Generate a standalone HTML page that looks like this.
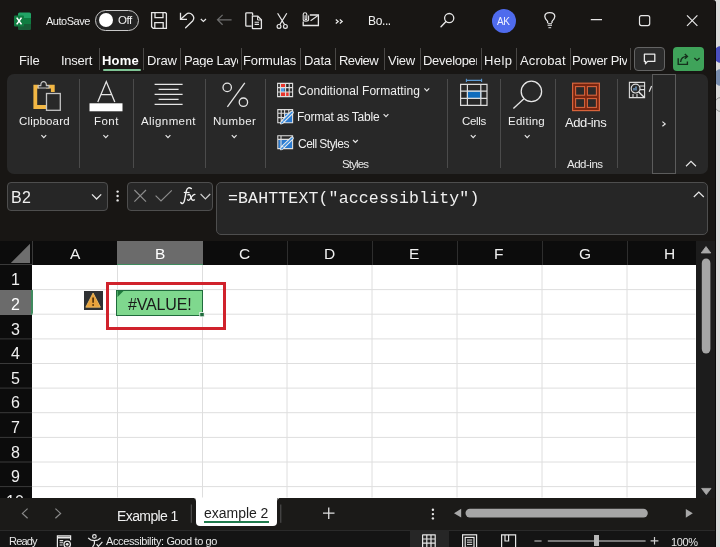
<!DOCTYPE html>
<html><head><meta charset="utf-8">
<style>
*{box-sizing:border-box;margin:0;padding:0}
html,body{width:720px;height:547px;overflow:hidden;background:#dcdcdc;font-family:"Liberation Sans",sans-serif}
.a{position:absolute}
.t{position:absolute;white-space:nowrap;line-height:1;color:#f2f2f2;will-change:transform}
#win{position:absolute;left:0;top:0;width:716px;height:547px;background:#181614;border-top-right-radius:3px;overflow:hidden;border-right:1px solid #0b0b0b}
.sep{position:absolute;width:1px;background:#4a4846}
.rsep{position:absolute;width:1px;background:#4b4b4b;top:79px;height:89px}
svg{position:absolute;overflow:visible}
</style></head><body>
<!-- outside strip -->
<div class="a" style="left:714px;top:46px;width:14px;height:17px;border-radius:8px;background:#4b50bf"></div>
<div class="a" style="left:714px;top:69px;width:14px;height:17px;border-radius:8px;background:#7a8fb0"></div>
<div class="a" style="left:714px;top:97px;width:14px;height:15px;border-radius:8px;border:1px solid #999"></div>

<div id="win">
<!-- ===== title bar ===== -->
<svg style="left:14px;top:12px" width="18" height="18" viewBox="0 0 18 18">
  <rect x="4" y="0.5" width="13" height="17" rx="1.5" fill="#21a366"/>
  <rect x="4" y="6" width="13" height="6" fill="#107c41"/>
  <rect x="4" y="12" width="13" height="5.5" fill="#185c37"/>
  <rect x="0" y="3.5" width="10" height="11" rx="1" fill="#107c41"/>
  <path d="M2.7 5.6 L7.5 12.4 M7.5 5.6 L2.7 12.4" stroke="#fff" stroke-width="1.6"/>
</svg>
<div class="a" style="left:95px;top:10px;width:44px;height:21px;border-radius:11px;border:1.5px solid #c8c8c8;background:#232323"></div>
<div class="a" style="left:99px;top:13px;width:14px;height:14px;border-radius:7px;background:#fff"></div>

<svg style="left:0;top:0" width="716" height="40" viewBox="0 0 716 40" fill="none" stroke="#e6e6e6" stroke-width="1.3">
  <!-- save -->
  <path d="M151.6 12.7 H165.5 L166.4 13.6 V28.3 H153.2 L151.6 26.7 Z"/>
  <path d="M155 12.7 V17.6 H163 V12.7"/>
  <path d="M154.8 28.3 V22.6 H163.2 V28.3"/>
  <!-- undo -->
  <path d="M180.5 12.8 V19.3 H187" />
  <path d="M180.9 19 L186 14.4 A4.7 4.7 0 0 1 192.6 21 L185.6 27.8" stroke-linecap="round"/>
  <path d="M200.8 19 L203.4 21.4 L206 19" stroke-width="1.2"/>
  <!-- back arrow -->
  <path d="M231.6 19.8 H217.5 M222.6 14.9 L217.5 19.8 L222.6 24.8" stroke="#6d6d6d" stroke-width="1.2"/>
  <!-- copy -->
  <path d="M252.6 15.4 V13.6 Q252.6 12.8 251.8 12.8 H246.6 Q245.8 12.8 245.8 13.6 V25.4 Q245.8 26.2 246.6 26.2 H251.6" />
  <path d="M252.4 16.2 H257.8 L261.4 19.8 V28.2 Q261.4 28.6 261 28.6 H252.8 Q252.4 28.6 252.4 28.2 Z"/>
  <path d="M257.6 16.4 V20 H261.2" stroke-width="1"/>
  <path d="M254.6 22.2 H259 M254.6 24.4 H259" stroke-width="1.1"/>
  <!-- scissors -->
  <path d="M277.6 13.2 L284.6 24.6 M286.8 13.2 L279.8 24.6" stroke-width="1.2"/>
  <circle cx="279" cy="26.4" r="1.9" stroke-width="1.2"/>
  <circle cx="285.4" cy="26.4" r="1.9" stroke-width="1.2"/>
  <!-- attach mail -->
  <path d="M309.8 15 H318.4 V25.5 H303.2 V21.6"/>
  <path d="M310.6 20.8 L318 15.5" stroke-width="1.1"/>
  <path d="M308.6 15.4 V19.6 C308.6 21.8 303.2 21.8 303.2 19.6 V14.4 C303.2 12.2 306.8 12.2 306.8 14.4 V19 C306.8 20 305.1 20 305.1 19 V15.2" stroke-width="1.1"/>
  <!-- >> -->
  <path d="M335.8 19.4 L338.2 21.5 L335.8 23.6 M339.8 19.4 L342.2 21.5 L339.8 23.6" stroke-width="1.3"/>
  <!-- search -->
  <circle cx="449.2" cy="18.1" r="4.6" stroke-width="1.3"/>
  <path d="M446 21.5 L441 26.8" stroke-width="1.4" stroke-linecap="round"/>
  <!-- bulb -->
  <path d="M547.6 23 V21.4 C546 19.8 544.8 18.6 544.8 16.6 C544.8 14 547 12.6 549.8 12.6 C552.6 12.6 554.8 14 554.8 16.6 C554.8 18.6 553.6 19.8 552 21.4 V23" stroke-width="1.3"/>
  <path d="M547.6 23.6 H552 M547.6 25.4 H552 M548.4 27.6 H551.2" stroke-width="1.4" stroke="#b8b8b8"/>
  <!-- window controls -->
  <path d="M590.8 19.6 H602" stroke-width="1.2"/>
  <rect x="639.5" y="15.6" width="10.2" height="10" rx="2" stroke-width="1.2"/>
  <path d="M687 15.4 L697.4 25.8 M697.4 15.4 L687 25.8" stroke-width="1.2"/>
</svg>


<div class="a" style="left:491.5px;top:8.5px;width:24px;height:24px;border-radius:12px;background:#4f6bed"></div>

<!-- ===== ribbon tabs ===== -->
<div class="sep" style="left:98.5px;top:48px;height:22px"></div>
<div class="a" style="left:102.5px;top:69px;width:38px;height:2px;background:#7fc495;border-radius:1px"></div>
<div class="sep" style="left:142.5px;top:48px;height:22px"></div>
<div class="sep" style="left:180px;top:48px;height:22px"></div>
<div class="sep" style="left:240.5px;top:48px;height:22px"></div>
<div class="sep" style="left:300px;top:48px;height:22px"></div>
<div class="sep" style="left:335px;top:48px;height:22px"></div>
<div class="sep" style="left:383.5px;top:48px;height:22px"></div>
<div class="sep" style="left:420px;top:48px;height:22px"></div>
<div class="sep" style="left:480.5px;top:48px;height:22px"></div>
<div class="sep" style="left:516px;top:48px;height:22px"></div>
<div class="sep" style="left:569.5px;top:48px;height:22px"></div>
<div class="sep" style="left:629.5px;top:48px;height:22px"></div>

<div class="a" style="left:634px;top:47px;width:31px;height:24px;border-radius:4px;border:1px solid #646464;background:#2b2b2b"></div>
<div class="a" style="left:673px;top:47px;width:31px;height:24px;border-radius:4px;background:#3fa35a"></div>
<svg style="left:0;top:0" width="716" height="80" viewBox="0 0 716 80" fill="none">
  <path d="M644.4 54.2 H654.8 V61.4 H647.6 L645.4 63.8 V61.4 H644.4 Z" stroke="#eaeaea" stroke-width="1.3" stroke-linejoin="round"/>
  <path d="M678.2 58.2 V64.4 H687.4 V61.4" stroke="#15301c" stroke-width="1.4"/>
  <path d="M680.6 62 C681 58.2 683.2 56.4 687 56.4 M684.8 54 L687.4 56.4 L684.8 58.8" stroke="#15301c" stroke-width="1.4"/>
  <path d="M694.4 58 L697 60.4 L699.6 58" stroke="#15301c" stroke-width="1.4"/>
</svg>

<!-- ===== ribbon panel ===== -->
<div class="a" style="left:6.5px;top:74px;width:701.5px;height:100px;border-radius:7px;background:#282828"></div>


<!-- ribbon contents -->
<div class="rsep" style="left:79px"></div>
<div class="rsep" style="left:133px"></div>
<div class="rsep" style="left:204.5px"></div>
<div class="rsep" style="left:265px"></div>
<div class="rsep" style="left:446.5px"></div>
<div class="rsep" style="left:500px"></div>
<div class="rsep" style="left:554.5px"></div>
<div class="rsep" style="left:616.5px"></div>
<svg style="left:0;top:70px" width="716" height="110" viewBox="0 70 716 110" fill="none" stroke="#e6e6e6" stroke-width="1.3">
  <!-- clipboard -->
  <path d="M39.2 86.6 H35.3 V107 H46" stroke="#f2b744" stroke-width="3.8"/>
  <path d="M46 86.6 H52.8 V92" stroke="#f2b744" stroke-width="3.8"/>
  <path d="M38.2 88 H49 L49 85.6 H46.4 C46.4 83.2 45.2 81.7 43.6 81.7 C42 81.7 40.8 83.2 40.8 85.6 H38.2 Z" fill="#282828" stroke="#c4c4c4" stroke-width="1.2"/>
  <rect x="46.5" y="93.5" width="13.8" height="16.8" fill="#282828" stroke="#c4c4c4" stroke-width="1.3"/>
  <!-- font A -->
  <path d="M97.8 102 L106.3 81.6 L114.8 102 M101 94.6 H111.6" stroke-width="1.3"/>
  <rect x="89.5" y="103.3" width="33" height="8" fill="#fff" stroke="none"/>
  <!-- alignment -->
  <path d="M154.6 84.4 H182.6 M158.6 89.4 H178.6 M154.6 94.4 H182.6 M158.6 99.4 H178.6 M154.6 104.4 H182.6" stroke-width="1.1"/>
  <!-- percent -->
  <circle cx="227.2" cy="87.4" r="4.2" stroke-width="1.3"/>
  <circle cx="243.4" cy="102.2" r="4.2" stroke-width="1.3"/>
  <path d="M244.8 82.8 L227.4 106.8" stroke-width="1.3"/>
  <!-- CF icon -->
  <rect x="280.4" y="83.4" width="5.4" height="4.2" fill="#e8342c" stroke="none"/>
  <rect x="280.4" y="87.6" width="4.2" height="4.4" fill="#4a9be8" stroke="none"/>
  <rect x="280.4" y="92" width="8.6" height="4.6" fill="#e8342c" stroke="none"/>
  <path d="M277.6 83.4 H292.6 V96.6 H277.6 Z M280.4 83.4 V96.6 M285.6 83.4 V96.6 M289.2 83.4 V96.6 M277.6 87.6 H292.6 M277.6 92 H292.6" stroke="#dedede" stroke-width="1.1"/>
  <!-- FAT icon -->
  <rect x="284.4" y="113.2" width="8.4" height="9.8" fill="#2a7ad0" stroke="none"/>
  <path d="M277.8 109.6 H292.6 V122.8 H277.8 Z M281.2 109.6 V122.8 M284.6 109.6 V122.8 M288.8 109.6 V113.2 M277.8 113.2 H292.6 M277.8 117.6 H284.6" stroke="#dedede" stroke-width="1.1"/>
  <path d="M282.6 121.6 L292 112.4" stroke="#ececec" stroke-width="3.6" stroke-linecap="round"/>
  <path d="M282.6 121.6 L292 112.4" stroke="#3a8ee0" stroke-width="1.6" stroke-linecap="round"/>
  <path d="M280.4 124 C280.6 122.4 281.4 121 283 120.6 L284 121.6 C283.6 123.2 282.2 124 280.4 124 Z" fill="#3a8ee0" stroke="#ececec" stroke-width="0.9"/>
  <!-- CS icon -->
  <rect x="278.4" y="139.4" width="14" height="9" fill="#2a7ad0" stroke="none"/>
  <path d="M277.8 135.8 H292.6 V148.6 H277.8 Z M277.8 139.4 H292.6 M281 135.8 V148.6" stroke="#dedede" stroke-width="1.1"/>
  <path d="M282.6 147.4 L292 138.2" stroke="#ececec" stroke-width="3.6" stroke-linecap="round"/>
  <path d="M282.6 147.4 L292 138.2" stroke="#3a8ee0" stroke-width="1.6" stroke-linecap="round"/>
  <path d="M280.4 149.8 C280.6 148.2 281.4 146.8 283 146.4 L284 147.4 C283.6 149 282.2 149.8 280.4 149.8 Z" fill="#3a8ee0" stroke="#ececec" stroke-width="0.9"/>
  <!-- chevrons for styles -->
  <path d="M424.4 88.4 L426.8 90.8 L429.2 88.4 M383.6 114.2 L386 116.6 L388.4 114.2 M353 140 L355.4 142.4 L357.8 140" stroke-width="1.2"/>
  <!-- group chevrons -->
  <path d="M41.4 135.2 L43.8 137.6 L46.2 135.2 M103.4 135.2 L105.8 137.6 L108.2 135.2 M165.6 135.2 L168 137.6 L170.4 135.2 M231.8 135.2 L234.2 137.6 L236.6 135.2 M470.8 135.2 L473.2 137.6 L475.6 135.2 M524.8 135.2 L527.2 137.6 L529.6 135.2" stroke-width="1.2"/>
  <!-- cells icon -->
  <path d="M466.4 80.4 H481.6 M466.4 78.8 V82 M481.6 78.8 V82" stroke="#5b9bd5" stroke-width="1.1"/>
  <rect x="467.4" y="91.2" width="13.4" height="7.2" fill="#0f6cbd" stroke="#7ab8f0" stroke-width="1"/>
  <path d="M460.6 84.4 H487 V105.4 H460.6 Z M467.4 84.4 V105.4 M480.8 84.4 V105.4 M460.6 91.2 H487 M460.6 98.4 H487" stroke="#dcdcdc" stroke-width="1.2"/>
  <!-- editing -->
  <circle cx="531.4" cy="91.4" r="10.2" stroke-width="1.3"/>
  <path d="M524.2 98.6 L513.4 108.6" stroke-width="1.3"/>
  <!-- add-ins -->
  <rect x="572.6" y="83.2" width="26.8" height="27.4" fill="#7a2610" stroke="#d8643c" stroke-width="1.2"/>
  <rect x="575.6" y="86.6" width="9" height="8.6" fill="#2a2a2a" stroke="#d8643c" stroke-width="1.1"/>
  <rect x="587.4" y="86.6" width="9" height="8.6" fill="#2a2a2a" stroke="#d8643c" stroke-width="1.1"/>
  <rect x="575.6" y="98.6" width="9" height="8.8" fill="#2a2a2a" stroke="#d8643c" stroke-width="1.1"/>
  <rect x="587.4" y="98.6" width="9" height="8.8" fill="#2a2a2a" stroke="#d8643c" stroke-width="1.1"/>
  <!-- small analyze icon -->
  <path d="M629.4 82.4 H644.6 V97.6 H629.4 Z M640 86 H644.6 M640 89.6 H644.6 M633 97.6 V94 M637 97.6 V94" stroke="#dcdcdc" stroke-width="1.1"/>
  <circle cx="635.6" cy="88.6" r="4.4" fill="#282828" stroke="#dcdcdc" stroke-width="1.2"/>
  <path d="M634 90.6 V88 M636 90.6 V86.4" stroke="#7fb2e6" stroke-width="1.2"/>
  <path d="M638.8 92 L644.4 97.6" stroke="#e6e6e6" stroke-width="1.4"/>
  <path d="M649.2 91.8 L651.6 86" stroke="#e6e6e6" stroke-width="1.2"/>
  <!-- collapse ^ -->
  <path d="M686 166.2 L691 161.4 L696 166.2" stroke-width="1.2"/>
</svg>
<div class="a" style="left:651.5px;top:74px;width:24.5px;height:99.5px;border:1px solid #5c5c5c;background:#262626"></div>
<svg style="left:0;top:0" width="716" height="180" viewBox="0 0 716 180" fill="none" stroke="#e6e6e6" stroke-width="1.2">
  <path d="M662.4 121.6 L665.2 123.9 L662.4 126.2"/>
</svg>

<!-- ===== formula row ===== -->
<div class="a" style="left:6.5px;top:181.5px;width:101px;height:29px;border-radius:4px;border:1px solid #4e4e4e;background:#262626"></div>
<div class="a" style="left:127px;top:181.5px;width:86px;height:29px;border-radius:4px;border:1px solid #4e4e4e;background:#262626"></div>
<div class="a" style="left:216px;top:182px;width:492px;height:52.5px;border-radius:5px;border:1px solid #4e4e4e;background:#262626"></div>

<!-- ===== grid ===== -->
<svg style="left:0;top:0" width="716" height="240" viewBox="0 0 716 240" fill="none" stroke="#e6e6e6" stroke-width="1.2">
  <path d="M92 194.4 L96.6 199 L101.2 194.4" stroke-width="1.3"/>
  <circle cx="117.6" cy="191.6" r="1.2" fill="#e6e6e6" stroke="none"/>
  <circle cx="117.6" cy="196" r="1.2" fill="#e6e6e6" stroke="none"/>
  <circle cx="117.6" cy="200.4" r="1.2" fill="#e6e6e6" stroke="none"/>
  <path d="M134.4 190 L146 201.6 M146 190 L134.4 201.6" stroke="#8c8c8c" stroke-width="1.2"/>
  <path d="M155.6 195.6 L161 201 L171.8 190.4" stroke="#8c8c8c" stroke-width="1.2"/>
  <path d="M200.6 194 L205.4 198.8 L210.2 194" stroke="#cfcfcf" stroke-width="1.2"/>
  <path d="M180.8 202.4 C181.6 204.2 183.2 203.8 184 201.8 C184.8 199.6 185.6 194 186.4 190.6 C187.2 187.6 189.4 187 191.4 188.6" stroke="#f0f0f0" stroke-width="1.4" stroke-linecap="round"/>
  <path d="M183.8 192.5 H189.6" stroke="#f0f0f0" stroke-width="1.2"/>
  <path d="M187.9 194.8 C189.6 193.8 190.3 195 190.9 197.2 C191.5 199.6 192.2 201 194.4 199.9" stroke="#f0f0f0" stroke-width="1.4" stroke-linecap="round"/>
  <path d="M194.9 194.4 C193.5 194.4 191.8 196.4 190.6 198.4 C189.4 200.4 188.4 200.8 187.6 199.8" stroke="#f0f0f0" stroke-width="1.3" stroke-linecap="round"/>
  <path d="M693.8 197 L698.8 192 L703.8 197" stroke-width="1.2"/>
</svg>

<div class="a" style="left:0;top:241px;width:695.5px;height:24px;background:#0c0c0c"></div>
<div class="a" style="left:117px;top:241px;width:85.5px;height:24px;background:#6b6b6b"></div>
<div class="a" style="left:117px;top:264px;width:85.5px;height:1.5px;background:#3f8a5e"></div>
<svg style="left:0;top:0" width="716" height="270" viewBox="0 0 716 270">
  <path d="M30 243.8 V263 H10.8 Z" fill="#6e6e6e"/>
</svg>
<div class="a" style="left:0;top:264px;width:32px;height:1px;background:#3a3a3a"></div>
<div class="a" style="left:31.5px;top:241px;width:1px;height:24px;background:#3a3a3a"></div>
<div class="a" style="left:286.5px;top:241px;width:1px;height:24px;background:#2e2e2e"></div>
<div class="a" style="left:371.5px;top:241px;width:1px;height:24px;background:#2e2e2e"></div>
<div class="a" style="left:456.5px;top:241px;width:1px;height:24px;background:#2e2e2e"></div>
<div class="a" style="left:541.5px;top:241px;width:1px;height:24px;background:#2e2e2e"></div>
<div class="a" style="left:626.5px;top:241px;width:1px;height:24px;background:#2e2e2e"></div>
<div class="a" style="left:0;top:265px;width:32px;height:232.5px;background:#0c0c0c"></div>
<div class="a" style="left:32px;top:265px;width:663.5px;height:232.5px;background:#fff"></div>
<div class="a" style="left:0;top:289.5px;width:32px;height:25px;background:#6b6b6b"></div>
<div class="a" style="left:31px;top:289.5px;width:1.5px;height:25px;background:#3f8a5e"></div>
<svg style="left:0;top:0" width="716" height="547" viewBox="0 0 716 547" fill="none" stroke="#dedede" stroke-width="1">
  <path d="M117.5 265 V497.5 M202.5 265 V497.5 M287 265 V497.5 M372 265 V497.5 M457 265 V497.5 M542 265 V497.5 M627 265 V497.5"/>
  <path d="M32 289.6 H695.5 M32 314.2 H695.5 M32 338.9 H695.5 M32 363.5 H695.5 M32 388.1 H695.5 M32 412.7 H695.5 M32 437.4 H695.5 M32 462 H695.5 M32 486.6 H695.5"/>
  <path d="M0 338.9 H32 M0 363.5 H32 M0 388.1 H32 M0 412.7 H32 M0 437.4 H32 M0 462 H32 M0 486.6 H32" stroke="#3a3a3a"/>
</svg>

<!-- error cell -->
<div class="a" style="left:84px;top:290.6px;width:19.2px;height:19.2px;background:#2f3133"></div>
<svg style="left:0;top:0" width="716" height="547" viewBox="0 0 716 547">
  <path d="M93.1 293 L100.4 307.2 H85.8 Z" fill="#e9a23b" stroke="#f5c46a" stroke-width="0.8" stroke-linejoin="round"/>
  <path d="M93.1 297.6 V302.8" stroke="#4a2c08" stroke-width="1.6"/>
  <circle cx="93.1" cy="305" r="0.9" fill="#4a2c08"/>
</svg>
<div class="a" style="left:106px;top:282.2px;width:119.8px;height:47.8px;border:3px solid #d0222c"></div>
<div class="a" style="left:116px;top:289.5px;width:87px;height:26px;background:#7fd88e;border:1.5px solid #1f6b3c"></div>
<svg style="left:0;top:0" width="716" height="547" viewBox="0 0 716 547">
  <path d="M117.5 291 H123.5 L117.5 297 Z" fill="#1f7a3c"/>
  <rect x="199.8" y="312.4" width="4.4" height="4.4" fill="#1f6b3c" stroke="#fff" stroke-width="0.8"/>
</svg>

<!-- vertical scrollbar -->
<div class="a" style="left:695.5px;top:241px;width:20.5px;height:256.5px;background:#1c1c1c"></div>
<svg style="left:0;top:0" width="716" height="547" viewBox="0 0 716 547">
  <path d="M706 246.6 L710.8 253 H701.2 Z" fill="#a8a8a8" stroke="#a8a8a8" stroke-width="0.8" stroke-linejoin="round"/>
  <rect x="701.8" y="258.6" width="8.6" height="94.8" rx="4.3" fill="#a6a6a6"/>
  <path d="M706.3 494.6 L711 488.4 H701.6 Z" fill="#a8a8a8" stroke="#a8a8a8" stroke-width="0.8" stroke-linejoin="round"/>
</svg>

<!-- ===== tab bar / status ===== -->
<div class="a" style="left:0;top:497.5px;width:716px;height:32px;background:#1b1a18"></div>
<div class="a" style="left:195.8px;top:497.5px;width:81.7px;height:28px;background:#fff;border-radius:0 0 4px 4px"></div>
<svg style="left:0;top:0" width="716" height="547" viewBox="0 0 716 547">
  <path d="M191.8 497.5 H195.8 V501.5 A4 4 0 0 0 191.8 497.5 Z" fill="#fff"/>
  <path d="M281.5 497.5 H277.5 V501.5 A4 4 0 0 1 281.5 497.5 Z" fill="#fff"/>
  <path d="M27.6 508.6 L22.4 513.4 L27.6 518.2 M55.4 508.6 L60.6 513.4 L55.4 518.2" stroke="#8a8a8a" stroke-width="1.2" fill="none"/>
  <path d="M191.3 504.5 V522.8 M280.8 504.5 V522.8" stroke="#555" stroke-width="1"/>
  <path d="M323 513.2 H334.5 M328.75 507.5 V519" stroke="#e0e0e0" stroke-width="1.3"/>
  <circle cx="432.9" cy="509.8" r="1.2" fill="#e6e6e6"/>
  <circle cx="432.9" cy="514.1" r="1.2" fill="#e6e6e6"/>
  <circle cx="432.9" cy="518.4" r="1.2" fill="#e6e6e6"/>
  <path d="M454 513.2 L461.2 508.8 V517.6 Z" fill="#a8a8a8"/>
  <rect x="465.5" y="508.7" width="182.3" height="8.8" rx="4.4" fill="#a6a6a6"/>
  <path d="M692.8 513.3 L685.8 508.9 V517.7 Z" fill="#a8a8a8"/>
</svg>
<div class="a" style="left:203.8px;top:520.8px;width:65px;height:2px;background:#1f7a4c"></div>

<div class="a" style="left:0;top:529.5px;width:716px;height:17.5px;background:#141414"></div>
<div class="a" style="left:0;top:529.5px;width:716px;height:1px;background:#2a2a2a"></div>
<div class="a" style="left:410px;top:530px;width:38.75px;height:17px;background:#262626"></div>
<svg style="left:0;top:0" width="716" height="547" viewBox="0 0 716 547" fill="none" stroke="#e6e6e6" stroke-width="1.2">
  <!-- status icon -->
  <path d="M57.4 547.5 V535.9 H70.6 V540.2" />
  <path d="M57.4 537.6 H70.6" stroke-width="1.8"/>
  <path d="M59.6 540.6 H63.2 M59.6 542.8 H63.2 M59.6 545 H62.6" stroke-width="1.1"/>
  <circle cx="67.2" cy="544.3" r="3.2" fill="#141414" stroke-width="1.3"/>
  <circle cx="67.2" cy="544.3" r="1.4" fill="#e6e6e6" stroke="none"/>
  <!-- accessibility -->
  <circle cx="94.4" cy="536.4" r="1.8"/>
  <path d="M88.2 537.8 C90 540 92 540.6 94.4 540.6 C96.8 540.6 98.8 540 100.6 537.8 M94.4 540.6 V544 M92.6 547 L94.4 544" />
  <path d="M96.6 544.2 L98.4 546.4 L102.4 541.8"/>
  <!-- grid view -->
  <path d="M422.4 534.8 H435.6 M422.4 539 H435.6 M422.4 543.2 H435.6 M422.6 534.8 V547 M426.8 534.8 V547 M431 534.8 V547 M435.2 534.8 V547"/>
  <!-- page layout -->
  <rect x="462.6" y="534.8" width="14" height="13"/>
  <rect x="465.2" y="537.4" width="8.8" height="10"/>
  <path d="M467 540 H472.2 M467 542.2 H472.2 M467 544.4 H472.2" stroke-width="1"/>
  <!-- page break -->
  <path d="M501.6 547 V534.8 H515.6 V547 M508.6 534.8 V541 H505 V534.8" />
  <!-- zoom -->
  <path d="M534.4 541 H541.6 M650.6 540.8 H658.4 M654.5 537 V544.6" stroke="#cfcfcf"/>
  <path d="M547.8 541 H645.6" stroke="#9a9a9a" stroke-width="1.6"/>
</svg>
<div class="a" style="left:593.6px;top:535.3px;width:5.6px;height:10.3px;background:#b8b8b8"></div>
<div class="t" style="left:46.00px;top:15.90px;font-size:11px;color:#f0f0f0;letter-spacing:-0.471px">AutoSave</div>
<div class="t" style="left:118.00px;top:15.40px;font-size:11.5px;color:#f0f0f0;letter-spacing:-0.5px">Off</div>
<div class="t" style="left:367.90px;top:15.20px;font-size:12px;color:#f0f0f0;letter-spacing:-0.375px">Bo...</div>
<div class="t" style="left:497.30px;top:17.30px;font-size:10px;color:#eef0ff;letter-spacing:-0.3px">AK</div>
<div class="t" style="left:19.30px;top:53.80px;font-size:13px;color:#f0f0f0;letter-spacing:-0.1px">File</div>
<div class="t" style="left:60.70px;top:53.80px;font-size:13px;color:#f0f0f0;letter-spacing:-0.24px">Insert</div>
<div class="t" style="left:102.00px;top:53.50px;font-size:13px;color:#ffffff;letter-spacing:0.167px;font-weight:bold">Home</div>
<div class="t" style="left:146.60px;top:53.80px;font-size:13px;color:#f0f0f0;letter-spacing:-0.133px">Draw</div>
<div class="t" style="left:183.60px;top:53.80px;font-size:13px;color:#f0f0f0;letter-spacing:-0.3px;width:53.90px;overflow:hidden">Page Layout</div>
<div class="t" style="left:243.00px;top:53.80px;font-size:13px;color:#f0f0f0;letter-spacing:-0.129px">Formulas</div>
<div class="t" style="left:303.90px;top:53.80px;font-size:13px;color:#f0f0f0;letter-spacing:-0.067px">Data</div>
<div class="t" style="left:338.90px;top:53.80px;font-size:13px;color:#f0f0f0;letter-spacing:-0.6px">Review</div>
<div class="t" style="left:388.20px;top:53.80px;font-size:13px;color:#f0f0f0;letter-spacing:-0.267px">View</div>
<div class="t" style="left:423.20px;top:53.80px;font-size:13px;color:#f0f0f0;letter-spacing:-0.3px;width:54.00px;overflow:hidden">Developer</div>
<div class="t" style="left:483.90px;top:53.80px;font-size:13px;color:#f0f0f0;letter-spacing:0.4px">Help</div>
<div class="t" style="left:519.90px;top:53.80px;font-size:13px;color:#f0f0f0;letter-spacing:0.117px">Acrobat</div>
<div class="t" style="left:572.00px;top:53.80px;font-size:13px;color:#f0f0f0;letter-spacing:-0.3px;width:55.20px;overflow:hidden">Power Pivot</div>
<div class="t" style="left:19.10px;top:116.00px;font-size:11.5px;color:#f0f0f0;letter-spacing:0.163px">Clipboard</div>
<div class="t" style="left:93.50px;top:116.00px;font-size:11.5px;color:#f0f0f0;letter-spacing:0.467px">Font</div>
<div class="t" style="left:141.40px;top:116.00px;font-size:11.5px;color:#f0f0f0;letter-spacing:0.412px">Alignment</div>
<div class="t" style="left:212.50px;top:116.00px;font-size:11.5px;color:#f0f0f0;letter-spacing:0.38px">Number</div>
<div class="t" style="left:461.70px;top:116.00px;font-size:11.5px;color:#f0f0f0;letter-spacing:-0.35px">Cells</div>
<div class="t" style="left:508.40px;top:116.00px;font-size:11.5px;color:#f0f0f0;letter-spacing:0.267px">Editing</div>
<div class="t" style="left:564.60px;top:116.40px;font-size:13px;color:#f0f0f0;letter-spacing:-0.4px">Add-ins</div>
<div class="t" style="left:297.50px;top:85.40px;font-size:12px;color:#f0f0f0;letter-spacing:0.052px">Conditional Formatting</div>
<div class="t" style="left:296.50px;top:111.30px;font-size:12px;color:#f0f0f0;letter-spacing:-0.229px">Format as Table</div>
<div class="t" style="left:297.50px;top:137.60px;font-size:12px;color:#f0f0f0;letter-spacing:-0.53px">Cell Styles</div>
<div class="t" style="left:341.50px;top:159.00px;font-size:11.5px;color:#e8e8e8;letter-spacing:-0.84px">Styles</div>
<div class="t" style="left:567.00px;top:158.70px;font-size:11.5px;color:#e8e8e8;letter-spacing:-0.483px">Add-ins</div>
<div class="t" style="left:11.30px;top:189.70px;font-size:16px;color:#f0f0f0;letter-spacing:0.4px">B2</div>
<div class="t" style="left:227.70px;top:190.60px;font-size:16.5px;color:#f0f0f0;letter-spacing:0.158px;font-family:'Liberation Mono',monospace">=BAHTTEXT("accessiblity")</div>
<div class="t" style="left:70.00px;top:245.80px;font-size:15.5px;color:#f0f0f0">A</div>
<div class="t" style="left:154.80px;top:245.60px;font-size:15.5px;color:#ffffff">B</div>
<div class="t" style="left:239.30px;top:245.60px;font-size:15.5px;color:#f0f0f0">C</div>
<div class="t" style="left:323.80px;top:245.60px;font-size:15.5px;color:#f0f0f0">D</div>
<div class="t" style="left:409.10px;top:245.60px;font-size:15.5px;color:#f0f0f0">E</div>
<div class="t" style="left:494.40px;top:245.60px;font-size:15.5px;color:#f0f0f0">F</div>
<div class="t" style="left:578.80px;top:245.60px;font-size:15.5px;color:#f0f0f0">G</div>
<div class="t" style="left:664.00px;top:245.60px;font-size:15.5px;color:#f0f0f0">H</div>
<div class="t" style="left:10.90px;top:271.60px;font-size:16px;color:#f0f0f0">1</div>
<div class="t" style="left:10.90px;top:296.60px;font-size:16px;color:#ffffff">2</div>
<div class="t" style="left:10.90px;top:321.60px;font-size:16px;color:#f0f0f0">3</div>
<div class="t" style="left:10.90px;top:346.20px;font-size:16px;color:#f0f0f0">4</div>
<div class="t" style="left:10.90px;top:370.80px;font-size:16px;color:#f0f0f0">5</div>
<div class="t" style="left:10.90px;top:395.40px;font-size:16px;color:#f0f0f0">6</div>
<div class="t" style="left:10.90px;top:420.00px;font-size:16px;color:#f0f0f0">7</div>
<div class="t" style="left:10.90px;top:444.60px;font-size:16px;color:#f0f0f0">8</div>
<div class="t" style="left:10.90px;top:469.20px;font-size:16px;color:#f0f0f0">9</div>
<div class="a" style="left:0px;top:265px;width:32px;height:232.5px;overflow:hidden"><div class="t" style="left:6.40px;top:228.80px;font-size:16px;color:#f0f0f0">10</div></div>
<div class="t" style="left:128.30px;top:296.80px;font-size:16px;color:#1a1a1a;letter-spacing:-0.15px">#VALUE!</div>
<div class="t" style="left:116.80px;top:508.90px;font-size:14px;color:#f0f0f0;letter-spacing:-0.6px">Example 1</div>
<div class="t" style="left:204.20px;top:505.60px;font-size:14px;color:#1e1e1e;letter-spacing:-0.025px">example 2</div>
<div class="t" style="left:9.25px;top:536.00px;font-size:11px;color:#e8e8e8;letter-spacing:-0.812px">Ready</div>
<div class="t" style="left:106.30px;top:536.20px;font-size:11px;color:#e8e8e8;letter-spacing:-0.375px">Accessibility: Good to go</div>
<div class="t" style="left:670.70px;top:536.90px;font-size:11px;color:#e8e8e8;letter-spacing:-0.4px">100%</div>
</div>
</body></html>
